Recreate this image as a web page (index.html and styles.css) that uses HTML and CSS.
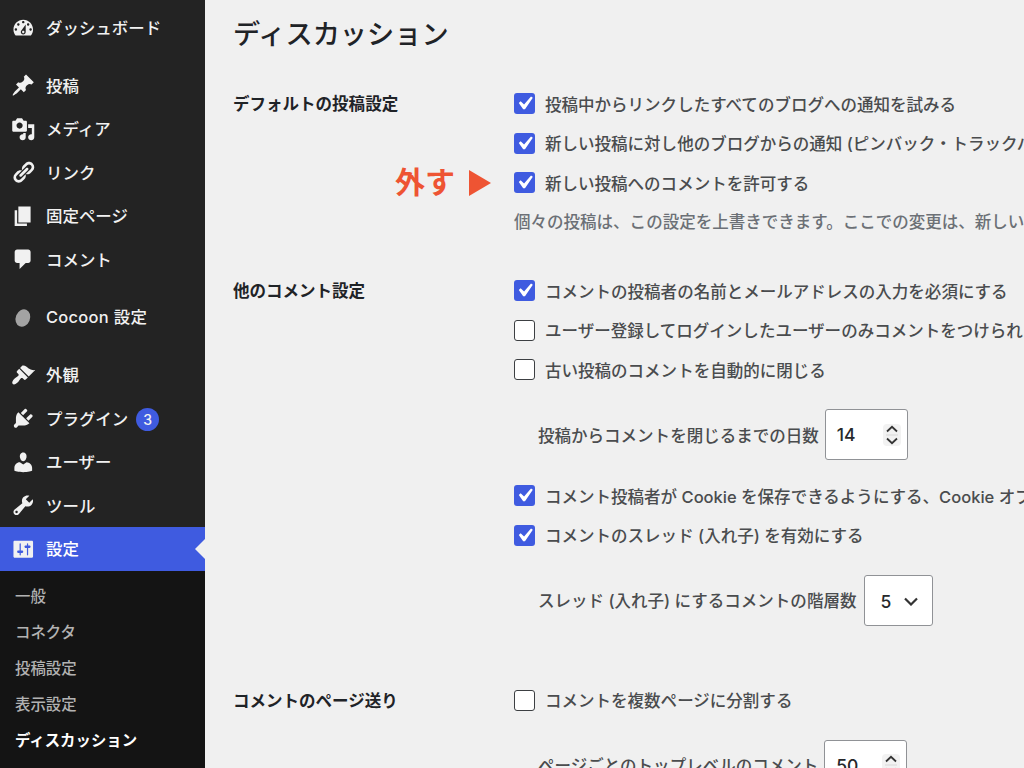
FILE: index.html
```html
<!DOCTYPE html>
<html lang="ja">
<head>
<meta charset="utf-8">
<title>ディスカッション</title>
<link rel="stylesheet" href="styles.css">
</head>
<body>
<div class="wrap">
	<ul class="menu">
		<li><svg class="icon" viewBox="0 0 20 20"><path d="M3.76 16h12.48c1.1-1.37 1.76-3.11 1.76-5 0-4.42-3.58-8-8-8s-8 3.58-8 8c0 1.89.66 3.63 1.76 5zM10 4c.55 0 1 .45 1 1s-.45 1-1 1-1-.45-1-1 .45-1 1-1zM6 6c.55 0 1 .45 1 1s-.45 1-1 1-1-.45-1-1 .45-1 1-1zm8 0c.55 0 1 .45 1 1s-.45 1-1 1-1-.45-1-1 .45-1 1-1zm-5.37 5.55L12 7v6c0 1.1-.9 2-2 2s-2-.9-2-2c0-.57.24-1.08.63-1.45zM4 10c.55 0 1 .45 1 1s-.45 1-1 1-1-.45-1-1 .45-1 1-1zm12 0c.55 0 1 .45 1 1s-.45 1-1 1-1-.45-1-1 .45-1 1-1zm-5 3c0-.55-.45-1-1-1s-1 .45-1 1 .45 1 1 1 1-.45 1-1z"/></svg><span>ダッシュボード</span></li>
		<li class="sep"></li>
		<li><svg class="icon" viewBox="0 0 20 20"><path d="M10.44 3.02l1.82-1.82 6.36 6.35-1.83 1.82c-1.05-.68-2.48-.57-3.41.36l-.75.75c-.92.93-1.04 2.35-.35 3.41l-1.83 1.82-2.41-2.41-2.8 2.79c-.42.42-3.38 2.71-3.8 2.29s1.86-3.39 2.28-3.81l2.79-2.79L4.1 9.36l1.83-1.82c1.05.69 2.48.57 3.4-.36l.75-.75c.93-.92 1.05-2.35.36-3.41z"/></svg><span>投稿</span></li>
		<li><svg class="icon" viewBox="0 0 20 20"><path d="M13 11V4c0-.55-.45-1-1-1h-1.67L9 1H5L3.67 3H2c-.55 0-1 .45-1 1v7c0 .55.45 1 1 1h10c.55 0 1-.45 1-1zM7 4.5c1.38 0 2.5 1.12 2.5 2.5S8.38 9.5 7 9.5 4.5 8.38 4.5 7 5.62 4.5 7 4.5zM14 6h5v10.5c0 1.38-1.12 2.5-2.5 2.5S14 17.88 14 16.5s1.12-2.5 2.5-2.5c.17 0 .34.02.5.05V9h-3V6zm-4 8.05V13h2v3.5c0 1.38-1.12 2.5-2.5 2.5S7 17.88 7 16.5 8.12 14 9.5 14c.17 0 .34.02.5.05z"/></svg><span>メディア</span></li>
		<li><svg class="icon" viewBox="0 0 20 20"><path d="M17.74 2.76c1.68 1.69 1.68 4.41 0 6.1l-1.53 1.52c-1.12 1.12-2.7 1.47-4.14 1.09l2.62-2.61.76-.77.76-.76c.84-.84.84-2.2 0-3.04-.84-.85-2.2-.85-3.04 0l-.77.76-3.38 3.38c-.37-1.44-.02-3.02 1.1-4.14l1.52-1.53c1.69-1.68 4.42-1.68 6.1 0zM8.59 13.43l5.34-5.34c.42-.42.42-1.1 0-1.52-.44-.43-1.13-.39-1.53 0l-5.33 5.34c-.42.42-.42 1.1 0 1.52.44.43 1.13.39 1.52 0zm-.76 2.29l4.14-4.15c.38 1.44.03 3.02-1.09 4.14l-1.52 1.53c-1.69 1.68-4.41 1.68-6.1 0-1.68-1.68-1.68-4.42 0-6.1l1.53-1.52c1.12-1.12 2.7-1.47 4.14-1.1l-4.14 4.15c-.85.84-.85 2.2 0 3.05.84.84 2.2.84 3.04 0z"/></svg><span>リンク</span></li>
		<li><svg class="icon" viewBox="0 0 20 20"><path d="M6 15V2h10v13H6zm-1 1h8v2H3V5h2v11z"/></svg><span>固定ページ</span></li>
		<li><svg class="icon" viewBox="0 0 20 20"><path d="M5 2h9c1.1 0 2 .9 2 2v7c0 1.1-.9 2-2 2h-2l-5 5v-5H5c-1.1 0-2-.9-2-2V4c0-1.1.9-2 2-2z"/></svg><span>コメント</span></li>
		<li class="sep"></li>
		<li><svg class="icon cocoon" viewBox="0 0 20 20"><ellipse cx="9.7" cy="10.6" rx="5.8" ry="7.3" transform="rotate(22 9.7 10.6)"/></svg><span class="latin">Cocoon 設定</span></li>
		<li class="sep"></li>
		<li><svg class="icon" viewBox="0 0 20 20"><path d="M14.48 11.06L7.41 3.99l1.5-1.5c.5-.56 2.3-.47 3.51.32 1.21.8 1.43 1.28 2.91 2.1 1.18.64 2.45 1.26 4.45.85zm-.71.71L6.7 4.7 4.93 6.47c-.39.39-.39 1.02 0 1.41l1.06 1.06c.39.39.39 1.03 0 1.42-.6.6-1.43 1.11-2.21 1.69-.35.26-.7.53-1.01.84C1.43 14.23.4 16.08 1.4 17.07c.99 1 2.84-.03 4.18-1.36.31-.31.58-.66.85-1.02.57-.78 1.08-1.61 1.69-2.21.39-.39 1.02-.39 1.41 0l1.06 1.06c.39.39 1.02.39 1.41 0z"/></svg><span>外観</span></li>
		<li><svg class="icon" viewBox="0 0 20 20"><path d="M13.11 4.36L9.87 7.6 8 5.73l3.24-3.24c.35-.34 1.05-.2 1.56.32.52.51.66 1.21.31 1.55zm-8 1.77l.91-1.12 9.01 9.01-1.19.84c-.71.71-2.63 1.16-3.82 1.16H6.14L4.9 17.26c-.59.59-1.54.59-2.12 0-.59-.58-.59-1.53 0-2.12l1.24-1.24v-3.88c0-1.13.4-3.19 1.09-3.89zm7.26 3.97l3.24-3.24c.34-.35 1.04-.21 1.55.31.52.51.66 1.21.31 1.55l-3.24 3.25z"/></svg><span>プラグイン</span><b class="count">3</b></li>
		<li><svg class="icon" viewBox="0 0 20 20"><path d="M10 9.25c-2.27 0-2.73-3.44-2.73-3.44C7 4.02 7.82 2 9.97 2c2.16 0 2.98 2.02 2.71 3.81 0 0-.41 3.44-2.68 3.44zm0 2.57L12.72 10c2.39 0 4.52 2.33 4.52 4.53v2.49s-3.65 1.13-7.24 1.13c-3.65 0-7.24-1.13-7.24-1.13v-2.49c0-2.25 1.94-4.48 4.47-4.48z"/></svg><span>ユーザー</span></li>
		<li><svg class="icon" viewBox="0 0 20 20"><path d="M16.68 9.77c-1.34 1.34-3.3 1.67-4.95.99l-5.41 6.52c-.99.99-2.59.99-3.58 0s-.99-2.59 0-3.57l6.52-5.42c-.68-1.65-.35-3.61.99-4.95 1.28-1.28 3.12-1.62 4.72-1.06l-2.89 2.89 2.82 2.82 2.86-2.87c.53 1.58.18 3.39-1.08 4.65zM3.81 16.21c.4.39 1.04.39 1.43 0 .4-.4.4-1.04 0-1.43-.39-.4-1.03-.4-1.43 0-.39.39-.39 1.03 0 1.43z"/></svg><span>ツール</span></li>
		<li class="current"><svg class="icon" viewBox="0 0 20 20"><path d="M18 16V4c0-.55-.45-1-1-1H3c-.55 0-1 .45-1 1v12c0 .55.45 1 1 1h14c.55 0 1-.45 1-1zM8 11h1c.55 0 1 .45 1 1s-.45 1-1 1H8v1.5c0 .28-.22.5-.5.5s-.5-.22-.5-.5V13H6c-.55 0-1-.45-1-1s.45-1 1-1h1V5.5c0-.28.22-.5.5-.5s.5.22.5.5V11zm5-2h-1c-.55 0-1-.45-1-1s.45-1 1-1h1V5.5c0-.28.22-.5.5-.5s.5.22.5.5V7h1c.55 0 1 .45 1 1s-.45 1-1 1h-1v5.5c0 .28-.22.5-.5.5s-.5-.22-.5-.5V9z"/></svg><span>設定</span></li>
		<li class="submenu">
			<ul>
				<li>一般</li>
				<li>コネクタ</li>
				<li>投稿設定</li>
				<li>表示設定</li>
				<li class="on">ディスカッション</li>
			</ul>
		</li>
	</ul>

	<div class="content">
		<h1>ディスカッション</h1>

		<div class="row">
			<div class="th">デフォルトの投稿設定</div>
			<div class="td">
				<label class="opt"><i class="cb checked"><svg viewBox="0 0 20 20"><path d="M14.83 4.89l1.34.94-5.81 8.38H9.02L5.78 9.67l1.34-1.25 2.57 2.4z"/></svg></i>投稿中からリンクしたすべてのブログへの通知を試みる</label>
				<label class="opt"><i class="cb checked"><svg viewBox="0 0 20 20"><path d="M14.83 4.89l1.34.94-5.81 8.38H9.02L5.78 9.67l1.34-1.25 2.57 2.4z"/></svg></i>新しい投稿に対し他のブログからの通知 (ピンバック・トラックバ</label>
				<label class="opt"><span class="note">外す<svg viewBox="0 0 22 26"><path d="M0 0l22 13L0 26z"/></svg></span><i class="cb checked"><svg viewBox="0 0 20 20"><path d="M14.83 4.89l1.34.94-5.81 8.38H9.02L5.78 9.67l1.34-1.25 2.57 2.4z"/></svg></i>新しい投稿へのコメントを許可する</label>
				<p class="desc">個々の投稿は、この設定を上書きできます。ここでの変更は、新しい</p>
			</div>
		</div>

		<div class="row">
			<div class="th">他のコメント設定</div>
			<div class="td">
				<label class="opt"><i class="cb checked"><svg viewBox="0 0 20 20"><path d="M14.83 4.89l1.34.94-5.81 8.38H9.02L5.78 9.67l1.34-1.25 2.57 2.4z"/></svg></i>コメントの投稿者の名前とメールアドレスの入力を必須にする</label>
				<label class="opt"><i class="cb"></i>ユーザー登録してログインしたユーザーのみコメントをつけられ</label>
				<label class="opt"><i class="cb"></i>古い投稿のコメントを自動的に閉じる</label>
				<div class="sub">投稿からコメントを閉じるまでの日数
					<span class="num">14<svg viewBox="0 0 18 22"><rect width="18" height="22" rx="4"/><path class="line" d="M3 11h12"/><path d="M4 7.5L9 2.8l5 4.7M4 14.5l5 4.7 5-4.7"/></svg></span>
				</div>
				<label class="opt"><i class="cb checked"><svg viewBox="0 0 20 20"><path d="M14.83 4.89l1.34.94-5.81 8.38H9.02L5.78 9.67l1.34-1.25 2.57 2.4z"/></svg></i>コメント投稿者が Cookie を保存できるようにする、Cookie オプ</label>
				<label class="opt"><i class="cb checked"><svg viewBox="0 0 20 20"><path d="M14.83 4.89l1.34.94-5.81 8.38H9.02L5.78 9.67l1.34-1.25 2.57 2.4z"/></svg></i>コメントのスレッド (入れ子) を有効にする</label>
				<div class="sub">スレッド (入れ子) にするコメントの階層数
					<span class="num sel">5<svg viewBox="0 0 14 9"><path d="M1 1.5l6 6 6-6"/></svg></span>
				</div>
			</div>
		</div>

		<div class="row">
			<div class="th">コメントのページ送り</div>
			<div class="td">
				<label class="opt"><i class="cb"></i>コメントを複数ページに分割する</label>
				<div class="sub">ページごとのトップレベルのコメント
					<span class="num">50<svg viewBox="0 0 18 22"><rect width="18" height="22" rx="4"/><path class="line" d="M3 11h12"/><path d="M4 7.5L9 2.8l5 4.7M4 14.5l5 4.7 5-4.7"/></svg></span>
				</div>
			</div>
		</div>
	</div>
</div>
</body>
</html>
```
FILE: styles.css
```css
* {
	box-sizing: border-box;
}
body {
	margin: 0;
	background: #f0f0f0;
	color: #4a4c4e;
	font-family: Inter, "Noto Sans CJK JP", sans-serif;
	font-size: 16.52px;
	font-weight: 450;
	overflow: hidden;
}
ul {
	list-style: none;
	margin: 0;
	padding: 0;
}
.wrap {
	display: flex;
	height: 768px;
	overflow: hidden;
}

/* menu */
.menu {
	flex: 0 0 205px;
	padding-top: 6px;
	background: #232323;
	color: #f1f1f1;
	font-size: 16.45px;
	font-weight: 500;
}
.menu > li {
	display: flex;
	align-items: center;
	height: 43.5px;
	padding-left: 11px;
	white-space: nowrap;
}
.menu > li > span {
	padding-bottom: 2px;
}
.menu > .sep {
	height: 14.3px;
}
.icon {
	width: 24.5px;
	height: 24.5px;
	margin-right: 10.5px;
	fill: #f1f1f1;
}
.cocoon {
	fill: #a3a3a3;
}
.latin {
	letter-spacing: .3px;
}
.count {
	width: 23px;
	height: 23px;
	margin: 2px 0 0 8px;
	border-radius: 50%;
	background: #3f5be0;
	font-size: 14px;
	font-weight: 500;
	line-height: 23px;
	text-align: center;
}
.menu > .current {
	position: relative;
	background: #3f5be0;
	color: #fff;
}
.current::after {
	content: "";
	position: absolute;
	right: 0;
	top: 12px;
	border: 10px solid transparent;
	border-left: 0;
	border-right-color: #f0f0f0;
}
.menu > .submenu {
	display: block;
	height: 210px;
	padding: 8px 0 0 15px;
	background: #141414;
	color: #b2b2b2;
	font-size: 15.4px;
}
.submenu li {
	height: 36px;
	line-height: 36px;
}
.submenu .on {
	color: #fff;
	font-weight: 700;
}

/* settings form */
.content {
	flex: 1;
	min-width: 0;
	padding-left: 28px;
}
h1 {
	height: 84px;
	margin: 0;
	color: #1f2327;
	font-size: 27.2px;
	font-weight: 500;
	line-height: 69px;
}
.row {
	display: flex;
	margin-bottom: 29px;
	white-space: nowrap;
}
.th {
	flex: 0 0 281px;
	padding-top: 1px;
	color: #1f2327;
	font-weight: 600;
	line-height: 39.5px;
}
.opt {
	display: flex;
	position: relative;
	align-items: center;
	height: 39.5px;
}
.cb {
	display: flex;
	flex: 0 0 21px;
	align-items: center;
	justify-content: center;
	width: 21px;
	min-width: 0;
	height: 21px;
	margin-right: 10px;
	border: 1.5px solid #3c3f42;
	border-radius: 3px;
	background: #fff;
}
.cb.checked {
	border: 0;
	background: #3f5be0;
}
.cb svg {
	flex: 0 0 27px;
	height: 27px;
	fill: #fff;
}
.desc {
	height: 39.5px;
	margin: 0;
	color: #6c7076;
	line-height: 39.5px;
}
.sub {
	display: flex;
	align-items: center;
	height: 51px;
	margin: 19.5px 0 16px 24px;
}
.opt + .sub:last-child {
	margin-bottom: 26px;
}
.num {
	display: flex;
	align-items: center;
	justify-content: space-between;
	width: 83px;
	height: 51px;
	margin-left: 6px;
	padding: 0 6px 0 11px;
	border: 1px solid #909296;
	border-radius: 3px;
	background: #fff;
	color: #26282b;
	font-size: 17.5px;
}
.num svg {
	width: 18px;
	height: 22px;
	fill: none;
	stroke: #333;
	stroke-width: 1.8;
}
.num rect {
	fill: #f2f2f2;
	stroke: none;
}
.num .line {
	stroke: #d8d8d8;
	stroke-width: 1;
}
.sel {
	width: 69px;
	margin-left: 8px;
	padding: 2px 14px 0 15px;
}
.sel svg {
	width: 14px;
	height: 9px;
	stroke-width: 2.2;
}

/* red callout left of the checkbox */
.note {
	display: flex;
	position: absolute;
	left: -119px;
	align-items: center;
	color: #ee5433;
	font-size: 30px;
	font-weight: 700;
	line-height: 41px;
}
.note svg {
	width: 22px;
	height: 26px;
	margin-left: 14px;
	fill: #ee5433;
}
```
